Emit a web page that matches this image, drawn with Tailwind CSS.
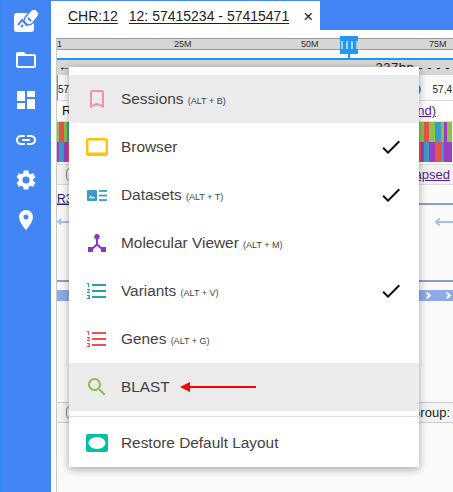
<!DOCTYPE html>
<html lang="en">
<head>
    <meta charset="UTF-8">
    <title>Genome Browser</title>
    <script src="https://cdn.jsdelivr.net/npm/@tailwindcss/browser@4"></script>
</head>
<body class="bg-white overflow-hidden">
    <div class="relative w-[453px] h-[492px] flex font-['Liberation_Sans',sans-serif] overflow-hidden">
        <!-- Sidebar -->
        <aside class="w-[51px] shrink-0 bg-[#4285f4] border-l border-[#2f8fe8] flex flex-col items-center text-white">
            <div class="h-10 w-full flex items-center justify-center">
                <svg width="26" height="26" viewBox="0 0 26 26" fill="none">
                    <rect x="1" y="6" width="20" height="19" rx="3" fill="#fff"/>
                    <path d="M16 13L21 7" stroke="#4285f4" stroke-width="11" stroke-linecap="round"/>
                    <path d="M16 13L21 7" stroke="#fff" stroke-width="8" stroke-linecap="round"/>
                    <path d="M5 18l4-5 3 3 2 3M8 20l2-2M15 11l3 3" stroke="#4285f4" stroke-width="2"/>
                </svg>
            </div>
            <div class="h-10 w-full flex items-center justify-center">
                <svg width="24" height="24" viewBox="0 0 24 24" fill="#fff"><path d="M20 6h-8l-2-2H4c-1.1 0-1.99.9-1.99 2L2 18c0 1.1.9 2 2 2h16c1.1 0 2-.9 2-2V8c0-1.1-.9-2-2-2zm0 12H4V8h16v10z"/></svg>
            </div>
            <div class="h-10 w-full flex items-center justify-center">
                <svg width="24" height="24" viewBox="0 0 24 24" fill="#fff"><path d="M3 13h8V3H3v10zm0 8h8v-6H3v6zm10 0h8V11h-8v10zm0-18v6h8V3h-8z"/></svg>
            </div>
            <div class="h-10 w-full flex items-center justify-center">
                <svg width="24" height="24" viewBox="0 0 24 24" fill="#fff"><path d="M3.9 12c0-1.71 1.39-3.1 3.1-3.1h4V7H7c-2.76 0-5 2.24-5 5s2.24 5 5 5h4v-1.9H7c-1.71 0-3.1-1.39-3.1-3.1zM8 13h8v-2H8v2zm9-6h-4v1.9h4c1.71 0 3.1 1.39 3.1 3.1s-1.39 3.1-3.1 3.1h-4V17h4c2.76 0 5-2.24 5-5s-2.24-5-5-5z"/></svg>
            </div>
            <div class="h-10 w-full flex items-center justify-center">
                <svg width="24" height="24" viewBox="0 0 24 24" fill="#fff"><path d="M19.14 12.94c.04-.3.06-.61.06-.94s-.02-.64-.07-.94l2.03-1.58a.49.49 0 0 0 .12-.61l-1.92-3.32a.49.49 0 0 0-.59-.22l-2.39.96c-.5-.38-1.03-.7-1.62-.94l-.36-2.54a.48.48 0 0 0-.48-.41h-3.84a.47.47 0 0 0-.47.41l-.36 2.54c-.59.24-1.13.57-1.62.94l-2.39-.96a.48.48 0 0 0-.59.22L2.74 8.87c-.12.21-.08.47.12.61l2.03 1.58c-.05.3-.09.63-.09.94s.02.64.07.94l-2.03 1.58a.49.49 0 0 0-.12.61l1.92 3.32c.12.22.37.29.59.22l2.39-.96c.5.38 1.03.7 1.62.94l.36 2.54c.05.24.24.41.48.41h3.84c.24 0 .44-.17.47-.41l.36-2.54c.59-.24 1.13-.56 1.62-.94l2.39.96c.22.08.47 0 .59-.22l1.92-3.32c.12-.22.07-.47-.12-.61l-2.01-1.58zM12 15.6A3.6 3.6 0 1 1 12 8.4a3.6 3.6 0 0 1 0 7.2z"/></svg>
            </div>
            <div class="h-10 w-full flex items-center justify-center">
                <svg width="24" height="24" viewBox="0 0 24 24" fill="#fff"><path d="M12 2C8.13 2 5 5.13 5 9c0 5.25 7 13 7 13s7-7.75 7-13c0-3.87-3.13-7-7-7zm0 9.5c-1.38 0-2.5-1.12-2.5-2.5s1.12-2.5 2.5-2.5 2.5 1.12 2.5 2.5-1.12 2.5-2.5 2.5z"/></svg>
            </div>
        </aside>

        <!-- Main -->
        <main class="flex-1 min-w-0 flex flex-col bg-[#fafafa]">
            <!-- Tab bar -->
            <div class="h-[30px] shrink-0 bg-[#4285f4] pt-px flex items-stretch">
                <div class="w-[269px] bg-white flex items-center pl-[17px] pt-px text-[14px] text-[#222] whitespace-nowrap">
                    <span class="underline underline-offset-2">CHR:12</span>
                    <span class="underline underline-offset-2 ml-[11px]">12: 57415234 - 57415471</span>
                    <span class="ml-[14px] text-[17px] leading-none">×</span>
                </div>
            </div>
            <div class="h-[8px] shrink-0 bg-white"></div>

            <div class="flex-1 pl-[5px] flex flex-col min-h-0">
                <div class="flex-1 flex flex-col border-l border-[#c8c8c8] min-h-0">
                    <!-- Ruler -->
                    <div class="relative h-[12px] shrink-0 bg-[#d6d6d6] border-y border-[#9a9a9a] text-[9px] leading-[10px] text-[#333]">
                        <span class="absolute left-0">1</span>
                        <span class="absolute left-[117px]">25M</span>
                        <span class="absolute left-[244px]">50M</span>
                        <span class="absolute left-[372px]">75M</span>
                    </div>
                    <div class="relative h-[8px] shrink-0 bg-[#f8f8f8]">
                        <div class="absolute left-[283px] top-[-14px] w-[18px] h-[18px] bg-[#2196f3] flex items-center justify-center gap-[3px]">
                            <i class="w-[2px] h-[8px] bg-white/60"></i><i class="w-[2px] h-[8px] bg-white/60"></i><i class="w-[2px] h-[8px] bg-white/60"></i><i class="w-[2px] h-[8px] bg-white/60"></i>
                        </div>
                        <div class="absolute left-[291px] top-[4px] w-[2px] h-[4px] bg-[#2196f3]"></div>
                    </div>
                    <div class="h-[2px] shrink-0 bg-[#2196f3]"></div>
                    <!-- Navigation row -->
                    <div class="h-[15px] shrink-0 bg-[#d6d6d6] flex justify-between text-[13px] text-[#222] pr-[3px]">
                        <span class="leading-[14px] pl-px">←</span>
                        <span class="leading-[15px] tracking-[0.5px]">237bp - - - -</span>
                    </div>
                    <div class="h-[25px] shrink-0 flex justify-between items-center text-[10px] text-[#222] pr-px pt-[3px] border-l border-[#888]">
                        <span>57,</span>
                        <span class="flex items-center gap-[12px]">
                            <i class="w-[13px] h-[13px] rounded-full bg-[#2196f3]"></i>
                            <span>57,4</span>
                        </span>
                    </div>
                    <div class="h-[22px] shrink-0 flex justify-between items-center text-[13px] border-y border-[#ddd] bg-white pr-[17px]">
                        <span class="pl-[5px] text-[#111]">R</span>
                        <span class="underline text-[#551a8b]">nd)</span>
                    </div>
                    <!-- Colour bars -->
                    <div class="h-[20px] shrink-0 flex pr-px">
                        <i class="w-[2px] bg-[#8bc34a]"></i><i class="w-[5px] bg-[#e5534b]"></i><i class="w-[3px] bg-[#8bc34a]"></i><i class="w-[2px] bg-[#3d9bc7]"></i>
                        <i class="flex-1"></i>
                        <i class="w-[5px] bg-[#8bc34a]"></i><i class="w-[5px] bg-[#e5534b]"></i><i class="w-[6px] bg-[#8bc34a]"></i><i class="w-[6px] bg-[#3d9bc7]"></i><i class="w-[3px] bg-[#8bc34a]"></i><i class="w-[3px] bg-[#9c3ec4]"></i><i class="w-[5px] bg-[#8bc34a]"></i>
                    </div>
                    <div class="h-[20px] shrink-0 flex pr-px">
                        <i class="w-[2px] bg-[#9c3ec4]"></i><i class="w-[5px] bg-[#3d9bc7]"></i><i class="w-[3px] bg-[#9c3ec4]"></i><i class="w-[2px] bg-[#e5534b]"></i>
                        <i class="flex-1"></i>
                        <i class="w-[2px] bg-[#e5534b]"></i><i class="w-[3px] bg-[#9c3ec4]"></i><i class="w-[5px] bg-[#3d9bc7]"></i><i class="w-[6px] bg-[#9c3ec4]"></i><i class="w-[6px] bg-[#e5534b]"></i><i class="w-[3px] bg-[#3d9bc7]"></i><i class="w-[3px] bg-[#9c3ec4]"></i><i class="w-[5px] bg-[#9c3ec4]"></i>
                    </div>
                    <div class="h-[21px] mt-[2px] shrink-0 flex justify-between items-center border-y border-[#ddd] bg-[#f3f3f3] text-[13px] pr-[3px]">
                        <span class="ml-[9px] w-[8px] h-[13px] border border-[#888] rounded-sm"></span>
                        <span class="underline text-[#551a8b]">apsed</span>
                    </div>
                    <!-- Reads -->
                    <div class="h-[20px] shrink-0 flex items-start justify-between border-b-2 border-[#8b9dc3] text-[12px]">
                        <span class="underline text-[#1a237e] mt-[5px]">R3</span>
                    </div>
                    <div class="h-[75px] shrink-0 flex justify-between items-start pt-[14px]">
                        <div class="flex items-center">
                            <i class="w-[5px] h-[5px] ml-px border-l-2 border-b-2 border-[#a9bfe9] rotate-45"></i>
                            <i class="w-[11px] h-[2px] -ml-[4px] bg-[#a9bfe9]"></i>
                        </div>
                        <div class="flex items-center">
                            <i class="w-[6px] h-[6px] border-l-2 border-b-2 border-[#a9bfe9] rotate-45"></i>
                            <i class="w-[16px] h-[2px] -ml-[5px] bg-[#a9bfe9]"></i>
                        </div>
                    </div>
                    <div class="h-[2px] shrink-0 bg-[#8b9dc3]"></div>
                    <div class="h-[11px] mt-[8px] shrink-0 bg-[#8fabe6] flex justify-end items-center gap-[15px] text-white pr-[3px]">
                        <i class="w-[5px] h-[5px] border-r-2 border-t-2 border-white rotate-45"></i>
                        <i class="w-[5px] h-[5px] border-r-2 border-t-2 border-white rotate-45"></i>
                    </div>
                    <div class="flex-1 min-h-0"></div>
                    <!-- Bottom row -->
                    <div class="h-[21px] shrink-0 flex justify-between items-center border-y border-[#ccc] bg-[#f3f3f3] text-[13px] text-[#222] pr-[3px]">
                        <span class="ml-[9px] w-[8px] h-[13px] border border-[#888] rounded-sm"></span>
                        <span>Group:</span>
                    </div>
                    <div class="h-[69px] shrink-0"></div>
                </div>
            </div>
        </main>

        <!-- Layout menu -->
        <div class="absolute left-[69px] top-[67px] w-[350px] h-[400px] bg-white pt-2 flex flex-col shadow-[0_2px_8px_rgba(0,0,0,0.35)] text-[15.4px] text-[#424242]">
            <div class="h-12 shrink-0 bg-[#ebebeb] flex items-center">
                <span class="w-[52px] pl-[4px] flex justify-center">
                    <svg width="24" height="24" viewBox="0 0 24 24" fill="#f48fb1"><path d="M17 3H7c-1.1 0-1.99.9-1.99 2L5 21l7-3 7 3V5c0-1.1-.9-2-2-2zm0 15l-5-2.18L7 18V5h10v13z"/></svg>
                </span>
                <span>Sessions <small class="text-[9px]">(ALT + B)</small></span>
            </div>
            <div class="h-12 shrink-0 flex items-center">
                <span class="w-[52px] pl-[4px] flex justify-center">
                    <svg width="22" height="18" viewBox="0 0 22 18"><rect x="1.2" y="1.2" width="19.600" height="15.600" rx="1.500" fill="none" stroke="#ffc107" stroke-width="2.400"/><rect x="1" y="14.500" width="20" height="3" fill="#ffc107"/></svg>
                </span>
                <span class="flex-1">Browser</span>
                <svg class="mr-[16px]" width="24" height="24" viewBox="0 0 24 24" fill="#111"><path d="M9 16.17L4.83 12l-1.42 1.41L9 19 21 7l-1.41-1.41z"/></svg>
            </div>
            <div class="h-12 shrink-0 flex items-center">
                <span class="w-[52px] pl-[4px] flex justify-center">
                    <svg width="20" height="11" viewBox="0 0 22 12" fill="#3d9bc7"><path d="M1 0h9a1 1 0 0 1 1 1v10a1 1 0 0 1-1 1H1a1 1 0 0 1-1-1V1a1 1 0 0 1 1-1z"/><path d="M2 9l2-3 1.500 2 1.500-1 2 2z" fill="#fff"/><rect x="13" y="0" width="9" height="2"/><rect x="13" y="5" width="9" height="2"/><rect x="13" y="10" width="9" height="2"/></svg>
                </span>
                <span class="flex-1">Datasets <small class="text-[9px]">(ALT + T)</small></span>
                <svg class="mr-[16px]" width="24" height="24" viewBox="0 0 24 24" fill="#111"><path d="M9 16.17L4.83 12l-1.42 1.41L9 19 21 7l-1.41-1.41z"/></svg>
            </div>
            <div class="h-12 shrink-0 flex items-center">
                <span class="w-[52px] pl-[4px] flex justify-center">
                    <svg width="18" height="18" viewBox="0 0 18 18" fill="#8e35c4"><circle cx="9" cy="2.700" r="2.700"/><rect x="0" y="13" width="5" height="5"/><rect x="13" y="13" width="5" height="5"/><path d="M8 5h2v5l4.500 4-1.300 1.500L9 12l-4.200 3.500L3.500 14 8 10z"/></svg>
                </span>
                <span>Molecular Viewer <small class="text-[9px]">(ALT + M)</small></span>
            </div>
            <div class="h-12 shrink-0 flex items-center">
                <span class="w-[52px] pl-[4px] flex justify-center">
                    <svg width="24" height="24" viewBox="0 0 24 24" fill="#26a69a"><path d="M2 17h2v.5H3v1h1v.5H2v1h3v-4H2v1zm1-9h1V4H2v1h1v3zm-1 3h1.800L2 13.100v.9h3v-1H3.200L5 10.900V10H2v1zm5-6v2h14V5H7zm0 14h14v-2H7v2zm0-6h14v-2H7v2z"/></svg>
                </span>
                <span class="flex-1">Variants <small class="text-[9px]">(ALT + V)</small></span>
                <svg class="mr-[16px]" width="24" height="24" viewBox="0 0 24 24" fill="#111"><path d="M9 16.170L4.830 12l-1.420 1.410L9 19 21 7l-1.410-1.410z"/></svg>
            </div>
            <div class="h-12 shrink-0 flex items-center">
                <span class="w-[52px] pl-[4px] flex justify-center">
                    <svg width="24" height="24" viewBox="0 0 24 24" fill="#ef5350"><path d="M2 17h2v.5H3v1h1v.5H2v1h3v-4H2v1zm1-9h1V4H2v1h1v3zm-1 3h1.800L2 13.100v.9h3v-1H3.200L5 10.900V10H2v1zm5-6v2h14V5H7zm0 14h14v-2H7v2zm0-6h14v-2H7v2z"/></svg>
                </span>
                <span>Genes <small class="text-[9px]">(ALT + G)</small></span>
            </div>
            <div class="relative h-12 shrink-0 bg-[#ebebeb] flex items-center">
                <span class="w-[52px] pl-[4px] flex justify-center">
                    <svg width="24" height="24" viewBox="0 0 24 24" fill="#8bc34a"><path d="M15.500 14h-.79l-.28-.27C15.410 12.590 16 11.110 16 9.500 16 5.910 13.090 3 9.500 3S3 5.910 3 9.500 5.910 16 9.500 16c1.610 0 3.090-.59 4.230-1.570l.27.28v.79l5 4.990L20.490 19l-4.990-5zm-6 0C7.010 14 5 11.990 5 9.500S7.010 5 9.500 5 14 7.010 14 9.500 11.990 14 9.500 14z"/></svg>
                </span>
                <span>BLAST</span>
                <!-- Red annotation arrow -->
                <svg class="absolute left-[111px] top-[18px]" width="77" height="12" viewBox="0 0 77 12" fill="#f00"><path d="M0 6l10-5v4h66v2H10v4z"/></svg>
            </div>
            <div class="h-px mt-[5px] shrink-0 bg-[#e0e0e0]"></div>
            <div class="flex-1 flex items-center pt-px">
                <span class="w-[52px] pl-[4px] flex justify-center">
                    <svg width="22" height="18" viewBox="0 0 22 18"><rect width="22" height="18" rx="2" fill="#00bfa5"/><ellipse cx="11" cy="9" rx="8.500" ry="6" fill="#fff"/></svg>
                </span>
                <span>Restore Default Layout</span>
            </div>
        </div>
    </div>
</body>
</html>
